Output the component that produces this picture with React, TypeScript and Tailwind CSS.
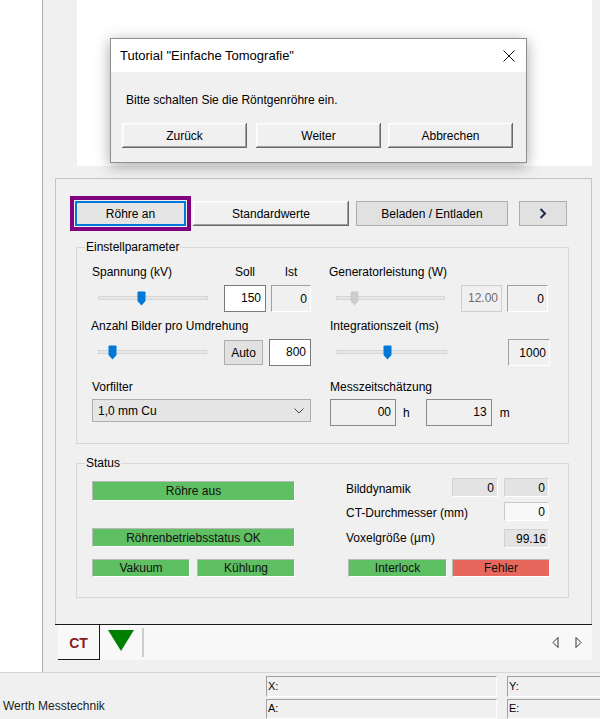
import React from "react";

function Thumb({ color }: { color: string }) {
  return (
    <svg width="9" height="15" viewBox="0 0 9 15" className="block">
      <path d="M0.5 1.5 Q0.5 0.5 1.5 0.5 H7.5 Q8.5 0.5 8.5 1.5 V10 L4.5 14.5 L0.5 10 Z" fill={color} />
    </svg>
  );
}

function Slider({ trackClass, thumbClass, color }: { trackClass: string; thumbClass: string; color: string }) {
  return (
    <div className={"relative h-[15px] " + trackClass}>
      <div className="absolute left-0 right-0 top-[5px] h-[4px] bg-[#e7e7e7] border border-[#d6d6d6]" />
      <div className={"absolute top-0 " + thumbClass}>
        <Thumb color={color} />
      </div>
    </div>
  );
}

const sunken = "border border-t-[#a0a0a0] border-l-[#a0a0a0] border-r-white border-b-white bg-[#f0f0f0]";
const raised =
  "bg-[#f0f0f0] shadow-[inset_-1px_-1px_#696969,inset_1px_1px_#ffffff,inset_-2px_-2px_#a0a0a0,inset_2px_2px_#f7f7f7]";
const green = "bg-[#5fbf63] border border-t-[#b9b9b9] border-l-[#b9b9b9] border-r-white border-b-white";
const statusBox = "border border-t-[#a0a0a0] border-l-[#a0a0a0] border-r-white border-b-white flex items-center pl-[1px] text-[11px]";

function Bar({ cls, children }: { cls: string; children?: React.ReactNode }) {
  return <div className={"flex items-center justify-center text-[#111] " + cls}>{children}</div>;
}

export default function App() {
  return (
    <div className="w-[600px] h-[719px] bg-[#f0f0f0] relative overflow-hidden font-['Liberation_Sans',Arial,sans-serif] text-[12px] text-black leading-none">
      <div className="flex h-[672px]">
        <div className="w-[42px] shrink-0 bg-white" />
        <div className="w-px shrink-0 bg-[#ababab]" />
        <div className="flex-1 flex flex-col">
          <div className="ml-[34px] w-[515px] h-[166px] bg-white" />
          {/* outer panel */}
          <div className="ml-[12px] mt-[12px] w-[537px] h-[446px] border border-b-0 border-[#c4c4c4] flex flex-col">
            {/* buttons row */}
            <div className="flex items-center h-[35px] mt-[17px] ml-[14px]">
              <div className="w-[121px] h-[35px] border-[4px] border-[#800080] p-px">
                <div className="w-full h-full border-2 border-[#0078d7] bg-[#e5e5e5] flex items-center justify-center">
                  Röhre an
                </div>
              </div>
              <div className={"ml-[2px] w-[156px] h-[25px] flex items-center justify-center " + raised}>Standardwerte</div>
              <div className="ml-[7px] w-[152px] h-[25px] flex items-center justify-center bg-[#e1e1e1] border border-[#adadad]">
                Beladen / Entladen
              </div>
              <div className="ml-[11px] w-[48px] h-[25px] flex items-center justify-center bg-[#e1e1e1] border border-[#adadad]">
                <svg width="8" height="11" viewBox="0 0 8 11">
                  <path d="M1.5 1 L6 5.5 L1.5 10" stroke="#1c2b4a" strokeWidth="2" fill="none" />
                </svg>
              </div>
            </div>

            {/* Einstellparameter */}
            <div className="relative ml-[20px] mt-[16px] w-[493px] h-[197px] border border-[#d7d7d7]">
              <span className="absolute left-[8px] -top-[8px] px-px bg-[#f0f0f0] leading-[14px]">Einstellparameter</span>
              <div className="flex pl-[15px] pt-[17px]">
                {/* left column */}
                <div className="w-[219px] flex flex-col">
                  <div className="flex h-[14px] leading-[14px]">
                    <span className="w-[132px]">Spannung (kV)</span>
                    <span className="w-[42px] text-center">Soll</span>
                    <span className="ml-[5px] w-[40px] text-center">Ist</span>
                  </div>
                  <div className="flex items-center h-[27px] mt-[6px]">
                    <div className="w-[132px] pl-[6px]">
                      <Slider trackClass="w-[110px]" thumbClass="left-[39px]" color="#0078d7" />
                    </div>
                    <div className="w-[42px] h-[27px] bg-white border border-[#7a7a7a] flex items-center justify-end pr-[4px] pb-[2px]">150</div>
                    <div className={"ml-[5px] w-[40px] h-[27px] flex items-center justify-end pr-[3px] " + sunken}>0</div>
                  </div>
                  <div className="h-[14px] leading-[14px] mt-[7px] -ml-px">Anzahl Bilder pro Umdrehung</div>
                  <div className="flex items-center h-[27px] mt-[6px]">
                    <div className="w-[132px] pl-[6px]">
                      <Slider trackClass="w-[109px]" thumbClass="left-[10px]" color="#0078d7" />
                    </div>
                    <div className="w-[39px] h-[25px] bg-[#e1e1e1] border border-[#adadad] flex items-center justify-center">Auto</div>
                    <div className="ml-[6px] w-[42px] h-[27px] bg-white border border-[#7a7a7a] flex items-center justify-end pr-[4px] pb-[2px]">800</div>
                  </div>
                  <div className="h-[14px] leading-[14px] mt-[14px]">Vorfilter</div>
                  <div className="mt-[5px] w-[219px] h-[23px] bg-[#e5e5e5] border border-[#adadad] flex items-center justify-between pl-[5px] pr-[6px]">
                    <span>1,0 mm Cu</span>
                    <svg width="10" height="6" viewBox="0 0 10 6">
                      <path d="M0.5 0.5 L5 5 L9.5 0.5" stroke="#444" strokeWidth="1" fill="none" />
                    </svg>
                  </div>
                </div>
                {/* right column */}
                <div className="ml-[18px] w-[221px] flex flex-col">
                  <div className="h-[14px] leading-[14px]">Generatorleistung (W)</div>
                  <div className="flex items-center h-[27px] mt-[6px]">
                    <div className="w-[132px] pl-[7px]">
                      <Slider trackClass="w-[109px]" thumbClass="left-[14px]" color="#cccccc" />
                    </div>
                    <div className="w-[41px] h-[27px] bg-[#f0f0f0] border border-[#cfcfcf] text-[#6d6d6d] flex items-center justify-end pr-[3px] pb-[2px]">12.00</div>
                    <div className={"ml-[5px] w-[41px] h-[27px] flex items-center justify-end pr-[3px] " + sunken}>0</div>
                  </div>
                  <div className="h-[14px] leading-[14px] mt-[7px] ml-px">Integrationszeit (ms)</div>
                  <div className="flex items-center h-[27px] mt-[6px]">
                    <div className="w-[179px] pl-[7px]">
                      <Slider trackClass="w-[111px]" thumbClass="left-[47px]" color="#0078d7" />
                    </div>
                    <div className={"w-[42px] h-[27px] flex items-center justify-end pr-[3px] " + sunken}>1000</div>
                  </div>
                  <div className="h-[14px] leading-[14px] mt-[14px] ml-px">Messzeitschätzung</div>
                  <div className="flex items-center h-[27px] mt-[5px]">
                    <div className="ml-px w-[66px] h-[27px] bg-[#f0f0f0] border border-[#8a8a8a] flex items-center justify-end pr-[4px] pb-[2px]">00</div>
                    <span className="ml-[7px]">h</span>
                    <div className="ml-[16px] w-[66px] h-[27px] bg-[#f0f0f0] border border-[#8a8a8a] flex items-center justify-end pr-[4px] pb-[2px]">13</div>
                    <span className="ml-[8px]">m</span>
                  </div>
                </div>
              </div>
            </div>

            {/* Status */}
            <div className="relative ml-[20px] mt-[19px] w-[493px] h-[135px] border border-[#d7d7d7]">
              <span className="absolute left-[8px] -top-[8px] px-px bg-[#f0f0f0] leading-[14px]">Status</span>
              <div className="flex">
                <div className="pl-[15px] w-[218px] flex flex-col">
                  <Bar cls={"mt-[17px] h-[20px] w-[203px] " + green}>Röhre aus</Bar>
                  <Bar cls={"mt-[27px] h-[19px] w-[203px] " + green}>Röhrenbetriebsstatus OK</Bar>
                </div>
                <div className="ml-[51px] w-[203px] pt-[14px] flex flex-col">
                  <div className="flex items-center h-[19px]">
                    <span className="flex-1 mt-[3px]">Bilddynamik</span>
                    <div className="w-[46px] h-[19px] bg-[#e3e3e3] border border-t-[#d2d2d2] border-l-[#d2d2d2] border-r-white border-b-white flex items-center justify-end pr-[3px]">0</div>
                    <div className="ml-[6px] w-[45px] h-[19px] bg-[#e3e3e3] border border-t-[#d2d2d2] border-l-[#d2d2d2] border-r-white border-b-white flex items-center justify-end pr-[3px]">0</div>
                  </div>
                  <div className="flex items-center h-[19px] mt-[5px]">
                    <span className="flex-1 mt-[2px]">CT-Durchmesser (mm)</span>
                    <div className="w-[45px] h-[19px] bg-[#f8f8f8] border border-t-[#c8c8c8] border-l-[#c8c8c8] border-r-white border-b-white flex items-center justify-end pr-[3px]">0</div>
                  </div>
                  <div className="flex items-center h-[19px] mt-[8px]">
                    <span className="flex-1 -mt-[1px]">Voxelgröße (µm)</span>
                    <div className="w-[45px] h-[19px] bg-[#e3e3e3] border border-t-[#d2d2d2] border-l-[#d2d2d2] border-r-white border-b-white flex items-center justify-end pr-[2px]">99.16</div>
                  </div>
                </div>
              </div>
              <div className="flex mt-[11px] pl-[15px] h-[18px]">
                <Bar cls={"w-[98px] h-[18px] " + green}>Vakuum</Bar>
                <Bar cls={"ml-[7px] w-[98px] h-[18px] " + green}>Kühlung</Bar>
                <Bar cls={"ml-[53px] w-[99px] h-[18px] " + green}>Interlock</Bar>
                <Bar cls="ml-[5px] w-[98px] h-[18px] bg-[#e8675d] border border-t-[#b9b9b9] border-l-[#b9b9b9] border-r-white border-b-white">Fehler</Bar>
              </div>
            </div>
          </div>

          {/* tab strip */}
          <div className="ml-[12px] w-[537px] h-[36px] border-t border-[#1a1a1a] flex">
            <div className="w-[3px]" />
            <div className="flex-1 flex items-stretch bg-[#f8f8f8]">
              <div className="w-[42px] border-r border-b border-[#1a1a1a] flex items-center justify-center text-[14px] font-bold text-[#8b1a1a] pt-[1px]">
                CT
              </div>
              <div className="w-[42px] flex items-center justify-center pb-[4px]">
                <svg width="26" height="21" viewBox="0 0 26 21">
                  <path d="M0 0 H26 L13 21 Z" fill="#008000" />
                </svg>
              </div>
              <div className="w-[2px] my-[3px] bg-[#cdcdcd]" />
              <div className="flex-1 flex items-center justify-end pr-[10px] gap-[16px] pb-[1px]">
                <svg width="7" height="11" viewBox="0 0 7 11">
                  <path d="M6 0.5 L1 5.5 L6 10.5 Z" stroke="#333" strokeWidth="1" fill="none" />
                </svg>
                <svg width="7" height="11" viewBox="0 0 7 11">
                  <path d="M1 0.5 L6 5.5 L1 10.5 Z" stroke="#333" strokeWidth="1" fill="none" />
                </svg>
              </div>
            </div>
          </div>
        </div>
      </div>

      {/* status bar */}
      <div className="h-[47px] border-t border-[#d6d6d6] flex">
        <div className="w-[266px] shrink-0 flex items-end pb-[7px] pl-[3px] text-[12px] text-[#222]">Werth Messtechnik</div>
        <div className="shrink-0 flex flex-col pt-[3px] gap-[2px]">
          <div className={"w-[231px] h-[21px] " + statusBox}>X:</div>
          <div className={"w-[231px] h-[21px] " + statusBox}>A:</div>
        </div>
        <div className="shrink-0 ml-[10px] flex flex-col pt-[3px] gap-[2px]">
          <div className={"w-[100px] h-[21px] " + statusBox}>Y:</div>
          <div className={"w-[100px] h-[21px] " + statusBox}>E:</div>
        </div>
      </div>

      {/* dialog */}
      <div className="absolute left-[110px] top-[38px] w-[417px] h-[125px] border border-[#8f8f8f] bg-[#f0f0f0] shadow-[0_3px_14px_rgba(0,0,0,0.35)] flex flex-col">
        <div className="h-[33px] bg-white flex items-center justify-between pl-[9px] pr-[11px]">
          <span className="text-[13px]">Tutorial "Einfache Tomografie"</span>
          <svg width="12" height="12" viewBox="0 0 12 12">
            <path d="M0.5 0.5 L11.5 11.5 M11.5 0.5 L0.5 11.5" stroke="#111" strokeWidth="1" />
          </svg>
        </div>
        <div className="pl-[15px] mt-[21px] h-[14px] leading-[14px]">Bitte schalten Sie die Röntgenröhre ein.</div>
        <div className="flex mt-[16px] pl-[11px]">
          <div className={"w-[125px] h-[25px] flex items-center justify-center " + raised}>Zurück</div>
          <div className={"ml-[9px] w-[125px] h-[25px] flex items-center justify-center " + raised}>Weiter</div>
          <div className={"ml-[7px] w-[125px] h-[25px] flex items-center justify-center " + raised}>Abbrechen</div>
        </div>
      </div>
    </div>
  );
}
